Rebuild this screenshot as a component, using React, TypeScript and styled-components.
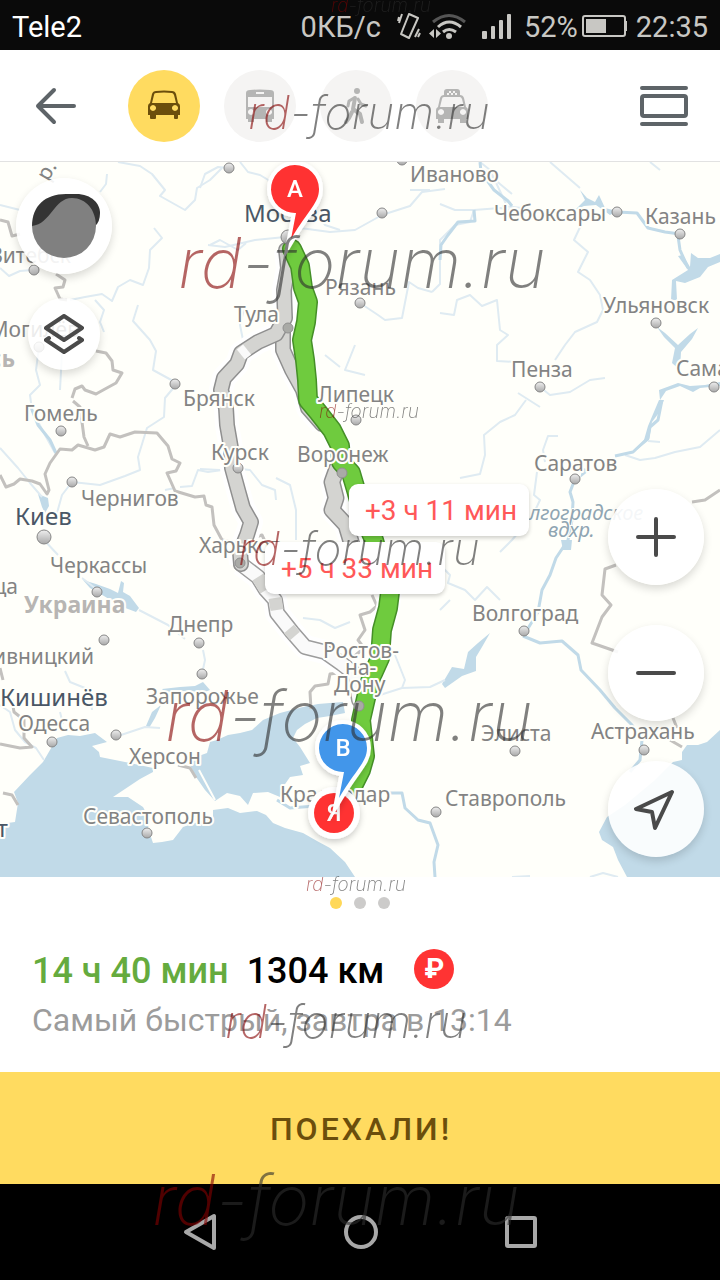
import React from "react";
import styled, { createGlobalStyle, css } from "styled-components";

const GlobalStyle = createGlobalStyle`
  *, *::before, *::after { box-sizing: border-box; }
  body { margin: 0; background: #000; font-family: Roboto, "Noto Sans", sans-serif; }
  button { font: inherit; color: inherit; border: 0; padding: 0; background: none; cursor: pointer; }
  svg { display: block; }
`;

const Page = styled.div`
  display: flex;
  flex-direction: column;
  min-height: 100vh;
  overflow: hidden;
`;

/* ---------- watermark ---------- */

const markSizes = { small: 19, medium: 46, large: 70 };

const Mark = styled.span<{ $size: keyof typeof markSizes; $x: number; $y: number }>`
  position: absolute;
  left: calc(50% + ${(p) => p.$x}px);
  top: ${(p) => p.$y}px;
  z-index: 5;
  font-family: Inter, "DejaVu Sans", sans-serif;
  font-weight: 200;
  font-style: italic;
  font-size: ${(p) => markSizes[p.$size]}px;
  line-height: 1;
  white-space: nowrap;
  color: #2d2d2d;
  opacity: 0.6;
  pointer-events: none;
`;

const MarkRed = styled.span`
  color: #850000;
`;

function Watermark(props: { size: keyof typeof markSizes; x: number; y: number }) {
  return (
    <Mark aria-hidden="true" $size={props.size} $x={props.x} $y={props.y}>
      <MarkRed>rd</MarkRed>-forum.ru
    </Mark>
  );
}

/* ---------- status bar ---------- */

const StatusBar = styled.div`
  position: relative;
  display: flex;
  align-items: center;
  justify-content: space-between;
  height: 50px;
  padding: 3px 12px 0;
  background: #0a0a0a;
  color: #c8c7c3;
  font-size: 29px;
  line-height: 32px;
`;

const Carrier = styled.span`
  color: #fff;
`;

const StatusGroup = styled.div<{ $gap: number }>`
  display: flex;
  align-items: center;
  gap: ${(p) => p.$gap}px;
`;

/* ---------- header ---------- */

const Header = styled.header`
  position: relative;
  display: flex;
  align-items: center;
  justify-content: space-between;
  height: 112px;
  padding: 0 32px;
  background: #fff;
  border-bottom: 1px solid #e2e2e2;
`;

const HeaderLeft = styled.div`
  display: flex;
  align-items: center;
  gap: 48px;
`;

const Modes = styled.nav`
  display: flex;
  gap: 24px;
`;

const IconButton = styled.button`
  display: grid;
  place-items: center;
  width: 48px;
  height: 48px;
`;

const ModeButton = styled.button<{ $active?: boolean }>`
  display: grid;
  place-items: center;
  width: 72px;
  height: 72px;
  border-radius: 50%;
  background: ${(p) => (p.$active ? "#ffdb60" : "#f5f4f3")};
  color: ${(p) => (p.$active ? "#6b4e0c" : "#b5b5b4")};
`;

/* ---------- map ---------- */

const MapArea = styled.main`
  position: relative;
  flex: 1;
  min-height: 715px;
  overflow: hidden;
  background: #fffffa;
`;

const MapSvg = styled.svg`
  position: absolute;
  inset: 0;
  width: 100%;
  height: 100%;
`;

const sideStack = css`
  position: absolute;
  display: flex;
  flex-direction: column;
  align-items: center;
`;

const LeftStack = styled.div`
  ${sideStack}
  left: 16px;
  top: 16px;
  gap: 24px;
`;

const RightStack = styled.div`
  ${sideStack}
  right: 16px;
  bottom: 20px;
  gap: 40px;
`;

const RoundButton = styled.button<{ $small?: boolean }>`
  display: grid;
  place-items: center;
  width: ${(p) => (p.$small ? 72 : 96)}px;
  height: ${(p) => (p.$small ? 72 : 96)}px;
  border-radius: 50%;
  background: rgba(255, 255, 255, ${(p) => (p.$small ? 0.85 : 0.9)});
  box-shadow: 0 4px 8px rgba(0, 0, 0, 0.15);
`;

const DelayButton = styled.button<{ $x: number; $y: number }>`
  position: absolute;
  left: calc(50% + ${(p) => p.$x}px);
  top: ${(p) => p.$y}px;
  height: 52px;
  width: 180px;
  padding: 2px 0 0 4px;
  border-radius: 9px;
  background: #fff;
  color: #ff5858;
  font-size: 28px;
  line-height: 50px;
  white-space: nowrap;
  box-shadow: 0 2px 4px rgba(0, 0, 0, 0.2);
`;

const Label = styled.text<{ $kind?: Kind }>`
  font-family: "Noto Sans", sans-serif;
  font-size: 21px;
  fill: #838383;
  stroke: #fffffa;
  stroke-width: 4px;
  stroke-linejoin: round;
  paint-order: stroke;
  ${(p) => p.$kind === "capital" && css`font-size: 24px; fill: #4a5766;`}
  ${(p) => p.$kind === "country" && css`font-size: 23px; font-weight: 700; fill: #b7b5b3;`}
  ${(p) => p.$kind === "water" && css`font-size: 20px; font-style: italic; fill: #8fa5b2; stroke-width: 2px;`}
`;

const PinText = styled.text`
  font-family: Roboto, sans-serif;
  font-size: 24px;
  font-weight: 500;
  fill: #fff;
  text-anchor: middle;
`;

type Kind = "capital" | "country" | "water";
type LabelDef = [string, number, number, Kind?, "end"?];

const labels: LabelDef[] = [
  ["Иваново", 410, 182],
  ["Чебоксары", 494, 221],
  ["Казань", 645, 224],
  ["Ульяновск", 603, 313],
  ["Пенза", 511, 377],
  ["Самара", 676, 376],
  ["Саратов", 534, 471],
  ["Волгоград", 472, 621],
  ["Элиста", 481, 741],
  ["Астрахань", 591, 739],
  ["Ставрополь", 445, 806],
  ["Рязань", 325, 295],
  ["Тула", 234, 322],
  ["Липецк", 318, 402],
  ["Воронеж", 297, 462],
  ["Курск", 211, 460],
  ["Брянск", 183, 406],
  ["Гомель", 24, 421],
  ["Чернигов", 81, 506],
  ["Черкассы", 50, 573],
  ["Днепр", 168, 632],
  ["Харьков", 199, 553],
  ["Запорожье", 146, 704],
  ["Херсон", 129, 764],
  ["Одесса", 18, 731],
  ["Севастополь", 83, 824],
  ["Ростов-", 323, 658],
  ["на-", 345, 675],
  ["Дону", 334, 692],
  ["Краснодар", 280, 802],
  ["Винница", 18, 594, undefined, "end"],
  ["Кропивницкий", 94, 664, undefined, "end"],
  ["Витебск", 71, 263, undefined, "end"],
  ["Могилёв", 79, 337, undefined, "end"],
  ["Беларусь", 15, 367, "country", "end"],
  ["Украина", 24, 613, "country"],
  ["Киев", 15, 525, "capital"],
  ["Кишинёв", 0, 706, "capital"],
  ["Москва", 244, 222, "capital"],
  ["Бухарест", 8, 837, "capital", "end"],
  ["Волгоградское", 506, 520, "water"],
  ["вдхр.", 548, 537, "water"],
];

const towns: [number, number][] = [
  [229, 168], [382, 213], [617, 212], [680, 234], [656, 323], [540, 387], [714, 387], [575, 479],
  [524, 631], [515, 751], [644, 750], [436, 812], [360, 303], [356, 420], [238, 468], [175, 384],
  [61, 431], [72, 482], [97, 592], [199, 643], [104, 640], [202, 674], [116, 735], [52, 742],
  [147, 833], [34, 270], [39, 347], [402, 160],
];

const routeTowns: [number, number][] = [[288, 328], [342, 473], [240, 563], [359, 706]];

const thinRivers = [
  "M240 162 L248 172 260 175 275 184 M200 188 L205 174 218 167 229 168",
  "M118 162 L140 166 152 174 165 190 160 196 185 210 195 200 197 188 210 180 222 168",
  "M107 174 L106 184 100 192",
  "M154 228 L162 238 150 250 149 268 143 285 130 280 118 287 112 301 102 294 85 297 70 300",
  "M0 268 L9 276 20 271 32 270 M39 347 L36 370 40 385 30 395 32 410 45 435 55 453 M62 352 L60 390",
  "M95 300 L104 310 100 322 104 332",
  "M210 245 L220 240 238 250 246 243 M138 305 L133 321 150 340 156 351 153 370 175 382",
  "M175 386 L165 398 164 417 147 428 138 457 140 470 135 472 125 476 100 485 72 482",
  "M0 448 L18 468 30 483 42 497 M72 482 L62 495 57 513",
  "M44 540 L58 555 M82 578 L95 588 M139 610 L168 625 185 639",
  "M203 650 L205 660 202 674 M160 728 L145 727 130 732 112 738",
  "M0 705 L10 712 15 730 25 742 36 748 44 760",
  "M65 671 L70 682 90 690 92 710 M60 712 L63 724",
  "M208 245 L225 247 255 240 285 237 M300 228 L330 232 355 230 382 215 410 206 422 192 445 189",
  "M360 303 L378 315 385 320 402 318 409 282 418 288 432 292 M432 292 L440 284 440 240 455 225 470 222 474 210 500 208 512 210",
  "M440 204 L455 210 475 210 M355 345 L345 370 365 375 M245 305 L240 325 243 340 M325 355 L340 367",
  "M480 162 L490 170 507 206 M502 206 L522 208 M485 170 L500 184 512 194 M550 162 L565 175 580 188",
  "M582 223 L574 240 588 252 578 272 590 280 600 295 603 310 597 322 575 332 565 345 555 360",
  "M440 313 L454 315 457 300 470 295 482 306 497 300 500 330 508 335 497 345 497 361 517 362",
  "M540 387 L550 395 570 392 590 380 605 378 M518 393 L540 407 M410 190 L430 190",
  "M526 400 L515 415 500 422 484 435 485 455 480 474 460 478",
  "M558 436 L548 436 543 450 545 462 M537 472 L534 495 540 500 533 515 512 540 500 552",
  "M625 455 L640 460 655 458 675 452 700 447 720 430 M648 441 L660 442",
  "M440 565 L450 575 448 583 465 590 475 600 487 587 500 600",
  "M303 618 L320 620 335 628 350 622 M276 478 L290 485 296 510 296 540",
  "M200 469 L220 470 M232 468 L250 470 262 485 275 490 276 500",
  "M180 487 L192 486 198 470 208 472 222 470",
  "M440 610 L450 600 M395 655 L405 680 402 688 380 695 370 705 M402 688 L430 687 445 680",
  "M590 877 L603 873 618 877 M512 877 L530 876 M165 490 L175 488",
  "M650 162 L660 170 M0 205 L20 210 M340 230 L325 225 318 215",
];

const wideRivers = [
  "M480 162 L481 172 494 190 508 201 512 206",
  "M523 636 L540 643 562 641 578 655 581 670 600 690 615 708 632 725 642 740 640 760 630 772",
  "M617 212 L637 213 648 228 665 232 680 234 M678 236 L680 250 688 268",
  "M575 479 L570 492 573 502 572 520 568 540 556 558 550 575 542 590 538 612 527 630",
  "M662 400 L658 420 650 427 648 438 633 452 615 456",
  "M30 405 L38 425 50 440 56 453",
  "M440 260 L441 245 448 235 458 222 475 221 474 210",
  "M277 800 L290 808 315 806 M389 793 L402 793 405 808 418 820 430 823 438 845 434 862 435 877",
];

const borders = [
  "M0 475 L6 487 14 484 20 479 32 481 40 484 47 494 49 490 45 474 50 463 60 449 72 450 78 445 95 450 104 447 110 434 120 437 135 432 157 433 168 446 172 459 180 463 176 471 167 473 175 491 195 497 204 496 206 505 212 507 214 525 222 540",
  "M73 401 L80 407 84 437 88 446",
  "M222 540 L238 543 262 535 268 548 290 560",
  "M56 274 L65 280 63 287 55 288 60 299 67 300 M96 351 L106 353 112 361 113 370 122 373 116 383 105 389 96 394 85 390 82 386 75 389 72 398",
  "M0 220 L8 222 12 236 20 234",
  "M372 595 L377 606 370 612 360 615 365 630 358 640 364 648 350 660",
  "M345 672 L330 674 328 684 315 686 310 692 311 709",
  "M720 490 L705 500 692 502 M616 565 L605 569 602 595 611 605 602 617 592 643 618 652 M673 718 L677 728 M670 740 L682 747",
  "M0 668 L3 680 M12 700 L14 712 24 720 24 738 32 747 20 748 10 746 0 744 M3 793 L12 795 18 805 M178 765 L190 768 196 778",
];

const bryanskRoute =
  "M286 250 L288 268 284 290 285 318 276 334 258 342 241 353 237 364 224 378 221 390 226 408 227 425 231 448 232 468 238 490 243 508 251 522 247 535 240 552 241 564";
const kharkivRoute =
  "M241 564 L258 577 266 590 275 600 277 613 292 632 305 647 325 652 342 664 355 674 359 700";
const lipetskRoute = "M283 332 L283 350 292 370 303 390 308 408 322 424";
const voronezhRoute = "M337 468 L332 482 336 498 332 510 346 525 352 545";
const mainRoute =
  "M292 249 L300 266 303 288 308 302 306 322 302 340 305 360 307 380 308 400 318 412 332 430 340 446 341 462 351 473 356 490 363 515 374 540 384 575 390 592 388 608 382 630 380 658 371 678 366 698 361 720 363 738 365 756 361 770 352 788 342 804";

function Route(props: { d: string; edge: string; fill: string; width?: number }) {
  const w = props.width ?? 16;
  return (
    <g fill="none" strokeLinejoin="round" strokeLinecap="round">
      <path d={props.d} stroke={props.edge} strokeWidth={w} />
      <path d={props.d} stroke={props.fill} strokeWidth={w - 3} />
    </g>
  );
}

function Pin(props: { x: number; y: number; color: string; letter: string }) {
  return (
    <g transform={`translate(${props.x} ${props.y})`} filter="url(#soft)">
      <path
        d="M-4 50 L1 24 A24 24 0 1 1 24 0 C24 14 14 20 -4 50 Z"
        fill={props.color}
        stroke="#fff"
        strokeWidth="8"
        strokeMiterlimit="8"
        paintOrder="stroke"
      />
      <PinText y="8">{props.letter}</PinText>
    </g>
  );
}

function MapDrawing() {
  return (
    <MapSvg viewBox="0 162 720 715" preserveAspectRatio="xMidYMid slice" role="img" aria-label="Карта маршрута">
      <defs>
        <linearGradient id="town" x1="0" y1="0" x2="0" y2="1">
          <stop offset="0" stopColor="#efefef" />
          <stop offset="1" stopColor="#a8a8a8" />
        </linearGradient>
        <filter id="soft" x="-50%" y="-50%" width="200%" height="200%">
          <feDropShadow dx="0" dy="3" stdDeviation="3" floodOpacity="0.2" />
        </filter>
      </defs>

      <g fill="#c1dae8">
        <path d="M0 824 L15 822 18 803 14 792 30 775 43 762 50 750 57 738 68 735 80 736 95 733 107 742 92 746 99 752 100 757 120 761 130 763 153 768 153 772 140 779 113 797 128 797 143 807 150 820 148 828 153 843 162 842 173 840 183 827 198 822 213 817 213 810 228 808 240 813 257 811 266 815 273 823 285 828 303 833 317 841 330 848 345 862 355 877 0 877 Z" />
        <path d="M215 801 L205 790 196 777 190 765 193 758 207 753 210 742 217 740 228 735 240 733 252 730 263 720 280 713 303 707 318 704 330 703 343 702 345 713 330 716 317 718 305 724 297 730 293 738 300 747 310 763 300 766 303 775 290 777 283 787 280 797 268 792 253 793 248 805 240 796 227 793 Z" />
        <path d="M720 730 L707 742 698 745 687 745 682 752 682 760 673 762 655 780 625 805 607 817 599 832 602 840 613 847 618 860 627 877 720 877 Z" />
        <path d="M83 580 L96 584 110 589 118 593 121 581 124 583 123 592 130 596 139 608 136 612 120 606 104 596 90 588 Z" />
        <path d="M38 494 L48 498 49 506 45 513 42 507 Z M162 689 L180 687 195 686 203 682 210 690 205 692 185 691 165 692 Z M161 705 L155 718 149 728 146 726 152 712 Z" />
        <path d="M490 633 L482 647 476 657 476 671 462 676 445 688 442 684 452 667 464 669 468 652 478 643 Z" />
        <path d="M580 190 L587 198 595 202 599 195 605 208 617 211 610 215 596 205 584 206 575 210 585 200 Z" />
        <path d="M683 255 L690 267 691 253 698 258 710 258 720 254 720 262 708 267 700 277 685 283 676 281 677 300 671 300 672 280 688 270 678 256 Z" />
        <path d="M657 327 L665 333 678 345 690 334 698 328 692 339 681 352 680 370 672 363 675 348 664 337 Z" />
        <path d="M660 400 L659 390 678 383 690 386 705 385 720 382 720 386 700 388 693 392 680 386 666 391 Z M561 540 L572 540 571 550 563 550 Z" />
        <path d="M659 400 L664 400 658 414 652 422 649 440 634 452 644 440 648 426 Z M583 468 L590 470 580 478 Z" />
      </g>
      <g fill="none" stroke="#dfebf2" strokeWidth="2" strokeLinejoin="round">
        {thinRivers.map((d) => <path key={d} d={d} />)}
      </g>
      <g fill="none" stroke="#c1dae8" strokeWidth="3" strokeLinejoin="round">
        {wideRivers.map((d) => <path key={d} d={d} />)}
      </g>
      <g fill="none" stroke="#c3c1be" strokeWidth="3" strokeLinejoin="round">
        {borders.map((d) => <path key={d} d={d} />)}
      </g>
      <path d="M199 770 L215 800" stroke="#fffffa" strokeWidth="2" />

      <g fill="none" stroke="#fff" strokeWidth="24" strokeLinejoin="round">
        {[bryanskRoute, kharkivRoute, lipetskRoute, voronezhRoute, mainRoute].map((d) => <path key={d} d={d} />)}
      </g>
      <Route d={kharkivRoute} edge="#9c9c9c" fill="#fafafa" />
      <path d="M258 577 L266 590 M275 598 L277 610 M289 629 L295 636" stroke="#d4d4d1" strokeWidth="13" />
      <Route d={lipetskRoute} edge="#8f8f8f" fill="#d4d4d1" />
      <Route d={voronezhRoute} edge="#8f8f8f" fill="#d4d4d1" width={17} />
      <Route d={bryanskRoute} edge="#8f8f8f" fill="#d4d4d1" />
      <path d="M240 347 L248 357" stroke="#fafafa" strokeWidth="8" />
      <Route d={mainRoute} edge="#458f27" fill="#6fcb3e" width={20} />

      <g fill="url(#town)" stroke="#868686">
        {towns.map(([x, y]) => <circle key={`${x}-${y}`} cx={x} cy={y} r="5" />)}
        <circle cx="44" cy="537" r="7" />
        <circle cx="288" cy="237" r="7" />
      </g>
      <g fill="#a9aaa6" stroke="#909090">
        {routeTowns.map(([x, y]) => <circle key={`${x}-${y}`} cx={x} cy={y} r="5" />)}
      </g>

      {labels.map(([text, x, y, kind, anchor]) => (
        <Label key={text} x={x} y={y} $kind={kind} textAnchor={anchor ?? "start"}>{text}</Label>
      ))}
      <Label transform="translate(48 182) rotate(-60)">р.</Label>

      <g filter="url(#soft)">
        <circle cx="334" cy="813" r="26" fill="#fff" />
        <circle cx="334" cy="813" r="20" fill="#ff3333" />
        <PinText x="334" y="821">Я</PinText>
      </g>
      <Pin x={295} y={189} color="#ff3333" letter="A" />
      <Pin x={343} y={748} color="#4296ea" letter="B" />
    </MapSvg>
  );
}

/* ---------- summary ---------- */

const Summary = styled.section`
  position: relative;
  height: 195px;
  padding: 20px 32px 0;
  background: #fff;
`;

const Dots = styled.div`
  display: flex;
  justify-content: center;
  gap: 12px;
`;

const Dot = styled.span<{ $active?: boolean }>`
  width: 12px;
  height: 12px;
  border-radius: 50%;
  background: ${(p) => (p.$active ? "#ffd858" : "#cccbca")};
`;

const RouteLine = styled.div`
  display: flex;
  align-items: center;
  gap: 18px;
  margin-top: 40px;
  font-size: 36px;
  font-weight: 500;
  line-height: 44px;
`;

const Duration = styled.span`
  color: #65ab3e;
`;

const Distance = styled.span`
  color: #000;
`;

const Toll = styled.span`
  display: grid;
  place-items: center;
  width: 40px;
  height: 40px;
  margin: 0 0 4px 12px;
  border-radius: 50%;
  background: #ff3333;
  color: #fff;
  font-size: 28px;
  font-weight: 700;
  line-height: 40px;
`;

const Note = styled.p`
  margin: 8px 0 0;
  color: #9c9c9c;
  font-size: 32px;
  line-height: 38px;
`;

const GoButton = styled.button`
  height: 112px;
  padding: 2px 0 0 2px;
  background: #ffdb60;
  color: #6b4e0c;
  font-size: 32px;
  font-weight: 500;
  letter-spacing: 3px;
`;

const SystemNav = styled.nav`
  position: relative;
  display: flex;
  align-items: center;
  justify-content: center;
  gap: 112px;
  height: 96px;
  background: #000;
`;

export default function App() {
  return (
    <>
      <GlobalStyle />
      <Page>
        <StatusBar>
          <Carrier>Tele2</Carrier>
          <StatusGroup $gap={8}>
            <span>0КБ/с</span>
            <svg width="32" height="28" viewBox="392 12 32 28" fill="none" stroke="currentColor" strokeWidth="2" strokeLinejoin="round">
              <path d="M412 13 L421 17 412 37 404 33 Z M402 16 L401 20 M405 13 L402 22 M422 28 L418 36 M423 32 L421 36" />
            </svg>
            <svg width="38" height="28" viewBox="432 12 38 28" fill="none" stroke="currentColor" strokeWidth="3">
              <path d="M436 21 Q452 8 468 21" stroke="#555" />
              <path d="M441 26 Q452 16 464 26 M446 31 Q452 26 459 31" />
              <circle cx="452" cy="35" r="3" fill="currentColor" stroke="none" />
              <path d="M437 28 v9 l-5 -4.500 Z M439 28 v9 l5 -4.500 Z" fill="currentColor" stroke="none" />
            </svg>
            <svg width="41" height="28" viewBox="478 12 41 28" fill="currentColor">
              <rect x="485" y="30" width="5" height="8" rx="1" />
              <rect x="494" y="25" width="4" height="13" rx="1" />
              <rect x="502" y="19" width="4" height="19" rx="1" />
              <rect x="510" y="13" width="4" height="25" rx="1" />
            </svg>
            <StatusGroup $gap={4}>
              <span>52%</span>
              <svg width="46" height="24" viewBox="0 0 46 24" fill="none" stroke="currentColor" strokeWidth="2">
                <rect x="1" y="1" width="42" height="20" rx="2" />
                <rect x="4" y="4" width="20" height="14" fill="currentColor" stroke="none" />
                <path d="M44 6 v10" />
              </svg>
            </StatusGroup>
            <span>22:35</span>
          </StatusGroup>
          <Watermark size="small" x={-29} y={-4} />
        </StatusBar>

        <Header>
          <HeaderLeft>
            <IconButton aria-label="Назад">
              <svg width="48" height="48" viewBox="32 82 48 48" fill="none" stroke="#5e6468" strokeWidth="4" strokeLinecap="round" strokeLinejoin="round">
                <path d="M74 106 H38 M54 90 L38 106 54 122" />
              </svg>
            </IconButton>
            <Modes aria-label="Способ передвижения">
              <ModeButton $active aria-label="Автомобиль">
                <svg width="32" height="32" viewBox="0 0 32 32" fill="currentColor">
                  <path fillRule="evenodd" d="M2 13 L4 4 Q5 1 8 1 Q16 0 24 1 Q27 1 28 4 L30 13 Q32 14 32 16 V25 H30 V28 Q30 29 29 29 H27 Q26 29 26 28 V25 H8 V28 Q8 29 7 29 H3 Q2 29 2 28 V25 H0 V16 Q0 14 2 13 Z M4 13 H28 L26 5 Q25 3 24 3 Q16 2 8 3 Q6 3 6 5 Z M5 15 a3 3 0 1 0 .01 0 Z M27 15 a3 3 0 1 0 .01 0 Z" />
                </svg>
              </ModeButton>
              <ModeButton aria-label="Общественный транспорт">
                <svg width="32" height="36" viewBox="0 0 32 36" fill="currentColor">
                  <path fillRule="evenodd" d="M2 5 Q2 2 6 2 Q16 1 26 2 Q30 2 30 5 V31 H28 V34 H22 V31 H10 V34 H4 V31 H2 Z M4 9 V19 H28 V9 Z M12 4 V6 H20 V4 Z M7 21 a3 3 0 1 0 .01 0 Z M25 21 a3 3 0 1 0 .01 0 Z" />
                </svg>
              </ModeButton>
              <ModeButton aria-label="Пешком">
                <svg width="32" height="38" viewBox="340 87 32 38" fill="none" stroke="currentColor" strokeWidth="4" strokeLinecap="round" strokeLinejoin="round">
                  <circle cx="357" cy="91" r="3" fill="currentColor" stroke="none" />
                  <path d="M355 98 L353 109 360 114 362 122 M352 112 L349 118 346 122" />
                  <path d="M354 98 L349 101 348 106 M358 99 L361 104 366 106" strokeWidth="3" />
                </svg>
              </ModeButton>
              <ModeButton aria-label="Такси">
                <svg width="32" height="36" viewBox="0 0 32 36" fill="currentColor">
                  <path d="M8 8 V4 Q8 1 11 1 H21 Q24 1 24 4 V8 Z" />
                  <path d="M11 5 h2 v-2 h2 v2 h2 v-2 h2 v2 h2 v2 h-2 v-2 h-2 v2 h-2 v-2 h-2 v2 h-2 Z" fill="#f5f4f3" />
                  <path fillRule="evenodd" d="M2 19 L4 10 Q5 7 8 7 H24 Q27 7 28 10 L30 19 Q32 20 32 22 V31 H30 V35 H24 V31 H8 V35 H2 V31 H0 V22 Q0 20 2 19 Z M4 19 H28 L26 11 Q25 9 24 9 H8 Q6 9 6 11 Z M5 21 a3 3 0 1 0 .01 0 Z M27 21 a3 3 0 1 0 .01 0 Z" />
                </svg>
              </ModeButton>
            </Modes>
          </HeaderLeft>
          <IconButton aria-label="Варианты">
            <svg width="48" height="40" viewBox="0 0 48 40" fill="none" stroke="#5e6468" strokeWidth="4" strokeLinecap="round">
              <path d="M2 2 H46 M2 38 H46" />
              <rect x="2" y="10" width="44" height="20" rx="2" />
            </svg>
          </IconButton>
          <Watermark size="medium" x={-112} y={39} />
        </Header>

        <MapArea>
          <MapDrawing />
          <DelayButton $x={-11} $y={322}>+3 ч 11 мин</DelayButton>
          <DelayButton $x={-95} $y={380}>+5 ч 33 мин</DelayButton>
          <LeftStack>
            <RoundButton aria-label="Меню">
              <svg width="96" height="96" viewBox="16 178 96 96">
                <path d="M32 226 C32 206 45 194 66 194 H76 C92 194 100 204 100 213 Q100 222 95 226 Z" fill="#343434" />
                <path d="M32 226 C51 224 54 198 72 198 C86 198 96 210 96 226 A32 32 0 0 1 32 226 Z" fill="#808080" />
              </svg>
            </RoundButton>
            <RoundButton $small aria-label="Слои">
              <svg width="40" height="40" viewBox="44 315 40 40" fill="none" stroke="#4a4a4a" strokeWidth="4" strokeLinecap="round" strokeLinejoin="round">
                <path d="M64 317 L82 329 64 341 46 329 Z M46 341 L64 353 82 341 M46 341 L49 339 M82 341 L79 339" />
              </svg>
            </RoundButton>
          </LeftStack>
          <RightStack>
            <RoundButton aria-label="Приблизить">
              <svg width="40" height="40" fill="none" stroke="#4a4a4a" strokeWidth="4" strokeLinecap="round">
                <path d="M20 2 V38 M2 20 H38" />
              </svg>
            </RoundButton>
            <RoundButton aria-label="Отдалить">
              <svg width="40" height="40" fill="none" stroke="#4a4a4a" strokeWidth="4" strokeLinecap="round">
                <path d="M2 20 H38" />
              </svg>
            </RoundButton>
            <RoundButton aria-label="Моё местоположение">
              <svg width="44" height="44" viewBox="634 788 44 44" fill="none" stroke="#4a4a4a" strokeWidth="4" strokeLinejoin="round">
                <path d="M672 793 L636 810 652 813 655 829 Z" />
              </svg>
            </RoundButton>
          </RightStack>
          <Watermark size="large" x={-182} y={66} />
          <Watermark size="small" x={-41} y={240} />
          <Watermark size="medium" x={-122} y={363} />
          <Watermark size="large" x={-195} y={519} />
        </MapArea>

        <Summary>
          <Dots>
            <Dot $active />
            <Dot />
            <Dot />
          </Dots>
          <RouteLine>
            <Duration>14 ч 40 мин</Duration>
            <Distance>1304 км</Distance>
            <Toll aria-label="Платные участки">₽</Toll>
          </RouteLine>
          <Note>Самый быстрый, завтра в 13:14</Note>
          <Watermark size="small" x={-54} y={-2} />
          <Watermark size="medium" x={-135} y={121} />
        </Summary>

        <GoButton>ПОЕХАЛИ!</GoButton>

        <SystemNav aria-label="Системная навигация">
          <IconButton aria-label="Назад">
            <svg width="40" height="40" fill="none" stroke="#a8a8a8" strokeWidth="4" strokeLinejoin="round">
              <path d="M6 20 L34 4 V36 Z" />
            </svg>
          </IconButton>
          <IconButton aria-label="Домой">
            <svg width="40" height="40" fill="none" stroke="#a8a8a8" strokeWidth="4">
              <circle cx="21" cy="20" r="15" />
            </svg>
          </IconButton>
          <IconButton aria-label="Недавние">
            <svg width="40" height="40" fill="none" stroke="#a8a8a8" strokeWidth="4">
              <rect x="7" y="6" width="28" height="28" rx="1" />
            </svg>
          </IconButton>
          <Watermark size="large" x={-208} y={-19} />
        </SystemNav>
      </Page>
    </>
  );
}
